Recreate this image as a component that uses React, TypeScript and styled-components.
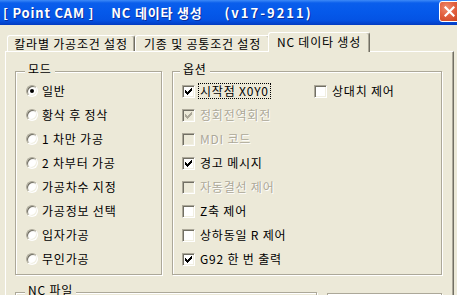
import React from 'react';
import styled, { createGlobalStyle } from 'styled-components';

const GlobalStyle = createGlobalStyle`
  html, body { margin: 0; padding: 0; background: #ECE9D8; }
  body { font-family: "Noto Sans CJK KR", "Liberation Sans", sans-serif; }
`;

const Window = styled.div`
  width: 457px;
  height: 295px;
  overflow: hidden;
  display: flex;
  flex-direction: column;
  background: #ECE9D8;
`;

const TitleBar = styled.div`
  height: 25px;
  flex: none;
  box-sizing: border-box;
  display: flex;
  align-items: center;
  padding-left: 3px;
  background: linear-gradient(to bottom, #3D8AF7 0px, #0A5EEC 3px, #0559EA 12px, #0453E4 20px, #0341C9 24px, #0339BE 25px);
`;

const TitleText = styled.div`
  flex: 1;
  display: flex;
  color: #fff;
  font: bold 13px "Noto Sans CJK KR", "Liberation Sans", sans-serif;
  line-height: 16px;
  text-shadow: 1px 1px 0 #0A2F9E;
  white-space: pre;
`;

const TitlePart = styled.span<{ $ml: number; $ls: number }>`
  margin-left: ${p => p.$ml}px;
  letter-spacing: ${p => p.$ls}px;
`;

const CloseButton = styled.div`
  flex: none;
  align-self: flex-start;
  width: 21px;
  height: 21px;
  margin-top: 1px;
  margin-right: -3px;
  box-sizing: border-box;
  border: 1px solid #fff;
  border-radius: 3px;
  background: radial-gradient(circle at 35% 30%, #F08C6E 0%, #E2603F 45%, #C8411E 100%);
  display: flex;
  align-items: center;
  justify-content: center;
`;

const Body = styled.div`
  flex: 1;
  display: flex;
  flex-direction: column;
  padding: 7px 3px 0 5px;
  min-height: 0;
`;

const TabStrip = styled.div`
  height: 19px;
  flex: none;
  display: flex;
  align-items: flex-end;
  padding-left: 2px;
  position: relative;
  z-index: 1;
`;

const Tab = styled.div<{ $active?: boolean; $w: number }>`
  box-sizing: border-box;
  width: ${p => p.$w}px;
  height: ${p => (p.$active ? 20 : 16)}px;
  margin-left: ${p => (p.$active ? -2 : 0)}px;
  margin-bottom: ${p => (p.$active ? -1 : 0)}px;
  border-top: 1px solid #fff;
  border-left: 1px solid #fff;
  border-right: 1px solid #716F64;
  box-shadow: inset -1px 0 0 #ACA899;
  border-radius: 3px 3px 0 0;
  background: #ECE9D8;
  position: relative;
  z-index: ${p => (p.$active ? 2 : 1)};
  display: flex;
  align-items: center;
  justify-content: center;
  padding-bottom: ${p => (p.$active ? 2 : 0)}px;
  font-size: 12px;
  line-height: 14px;
  letter-spacing: 0.8px;
  color: #000;
  white-space: nowrap;
`;

const Panel = styled.div`
  flex: 1;
  display: flex;
  flex-direction: column;
  gap: 17px;
  padding: 19px 0 0 9px;
  border-top: 1px solid #fff;
  border-left: 1px solid #fff;
  border-right: 1px solid #716F64;
  box-shadow: inset -1px 0 0 #ACA899;
`;

const GroupRow = styled.div`
  display: flex;
  gap: 10px;
  align-items: flex-start;
`;

const Group = styled.div<{ $w: number; $top?: number }>`
  position: relative;
  box-sizing: border-box;
  width: ${p => p.$w}px;
  margin-top: ${p => p.$top ?? 0}px;
  padding: 7px 0 3px 0;
  border: 1px solid #ACA899;
  box-shadow: inset 1px 1px 0 #fff, 1px 1px 0 #fff;
  min-height: 30px;
`;

const Legend = styled.span<{ $x: number }>`
  position: absolute;
  top: -10px;
  left: ${p => p.$x}px;
  padding: 0 3px;
  background: #ECE9D8;
  font-size: 12px;
  line-height: 14px;
  letter-spacing: 0.8px;
  color: #000;
`;

const OptionList = styled.div<{ $indent: number }>`
  display: flex;
  flex-direction: column;
  padding-left: ${p => p.$indent}px;
`;

const Row = styled.div`
  height: 24px;
  display: flex;
  align-items: center;
`;

const Choice = styled.label<{ $w?: number; $gap: number }>`
  display: flex;
  align-items: center;
  gap: ${p => p.$gap}px;
  width: ${p => (p.$w ? `${p.$w}px` : 'auto')};
  font-size: 12px;
  line-height: 14px;
  letter-spacing: 0.8px;
  white-space: nowrap;
`;

const Caption = styled.span<{ $disabled?: boolean; $focus?: boolean }>`
  padding: 0 1px;
  border: 1px ${p => (p.$focus ? 'dotted #000' : 'solid transparent')};
  color: ${p => (p.$disabled ? '#ACA899' : '#000')};
  text-shadow: ${p => (p.$disabled ? '1px 1px 0 #fff' : 'none')};
`;

const Box = styled.span<{ $disabled?: boolean }>`
  flex: none;
  width: 13px;
  height: 13px;
  box-sizing: border-box;
  border: 1px solid;
  border-color: #ACA899 #fff #fff #ACA899;
  box-shadow: inset 1px 1px 0 #716F64, inset -1px -1px 0 #F1EFE2;
  background: ${p => (p.$disabled ? '#ECE9D8' : '#fff')};
  display: flex;
  align-items: center;
  justify-content: center;
`;

const Circle = styled.span`
  flex: none;
  width: 12px;
  height: 12px;
  border-radius: 50%;
  box-sizing: border-box;
  border: 1px solid;
  border-color: #ACA899 #fff #fff #ACA899;
  box-shadow: inset 1px 1px 0 #716F64, inset -1px -1px 0 #F1EFE2;
  background: radial-gradient(circle at 60% 60%, #fff 40%, #E8E6DC 100%);
  display: flex;
  align-items: center;
  justify-content: center;
`;

const Dot = styled.span`
  width: 4px;
  height: 4px;
  border-radius: 50%;
  background: #000;
`;

const CheckMark = ({ color }: { color: string }) => (
  <svg width="7" height="7" viewBox="0 0 7 7" shapeRendering="crispEdges">
    <path
      fill={color}
      d="M0 2h1v3H0z M1 3h1v3H1z M2 4h1v3H2z M3 3h1v3H3z M4 2h1v3H4z M5 1h1v3H5z M6 0h1v3H6z"
    />
  </svg>
);

const Radio = ({ label, checked }: { label: string; checked?: boolean }) => (
  <Row>
    <Choice $gap={2}>
      <Circle>{checked && <Dot />}</Circle>
      <Caption>{label}</Caption>
    </Choice>
  </Row>
);

type CheckProps = { label: string; checked?: boolean; disabled?: boolean; focus?: boolean; w?: number };

const Check = ({ label, checked, disabled, focus, w }: CheckProps) => (
  <Choice $gap={3} $w={w}>
    <Box $disabled={disabled}>{checked && <CheckMark color={disabled ? '#ACA899' : '#000'} />}</Box>
    <Caption $disabled={disabled} $focus={focus}>{label}</Caption>
  </Choice>
);

const modes = ['일반', '황삭 후 정삭', '1 차만 가공', '2 차부터 가공', '가공차수 지정', '가공정보 선택', '입자가공', '무인가공'];

const options: CheckProps[] = [
  { label: '정회전역회전', checked: true, disabled: true },
  { label: 'MDI 코드', disabled: true },
  { label: '경고 메시지', checked: true },
  { label: '자동결선 제어', disabled: true },
  { label: 'Z축 제어' },
  { label: '상하동일 R 제어' },
  { label: 'G92 한 번 출력', checked: true },
];

export default function App() {
  return (
    <>
      <GlobalStyle />
      <Window>
        <TitleBar>
          <TitleText>
            <TitlePart $ml={0} $ls={0.8}>[ Point CAM ]</TitlePart>
            <TitlePart $ml={17} $ls={0.8}>NC 데이타 생성</TitlePart>
            <TitlePart $ml={22} $ls={2}>(v17-9211)</TitlePart>
          </TitleText>
          <CloseButton>
            <svg width="11" height="11" viewBox="0 0 11 11">
              <path d="M1.5 1.5L9.5 9.5M9.5 1.5L1.5 9.5" stroke="#fff" strokeWidth="2.2" strokeLinecap="square" />
            </svg>
          </CloseButton>
        </TitleBar>
        <Body>
          <TabStrip>
            <Tab $w={128}>칼라별 가공조건 설정</Tab>
            <Tab $w={135}>기종 및 공통조건 설정</Tab>
            <Tab $w={102} $active>NC 데이타 생성</Tab>
          </TabStrip>
          <Panel>
            <GroupRow>
              <Group $w={147}>
                <Legend $x={9}>모드</Legend>
                <OptionList $indent={10}>
                  {modes.map((m, i) => (
                    <Radio key={m} label={m} checked={i === 0} />
                  ))}
                </OptionList>
              </Group>
              <Group $w={270}>
                <Legend $x={7}>옵션</Legend>
                <OptionList $indent={9}>
                  <Row>
                    <Check label="시작점 X0Y0" checked focus w={132} />
                    <Check label="상대치 제어" />
                  </Row>
                  {options.map(o => (
                    <Row key={o.label}>
                      <Check {...o} />
                    </Row>
                  ))}
                </OptionList>
              </Group>
            </GroupRow>
            <GroupRow>
              <Group $w={302}>
                <Legend $x={9}>NC 파일</Legend>
              </Group>
              <Group $w={115} $top={1} />
            </GroupRow>
          </Panel>
        </Body>
      </Window>
    </>
  );
}
